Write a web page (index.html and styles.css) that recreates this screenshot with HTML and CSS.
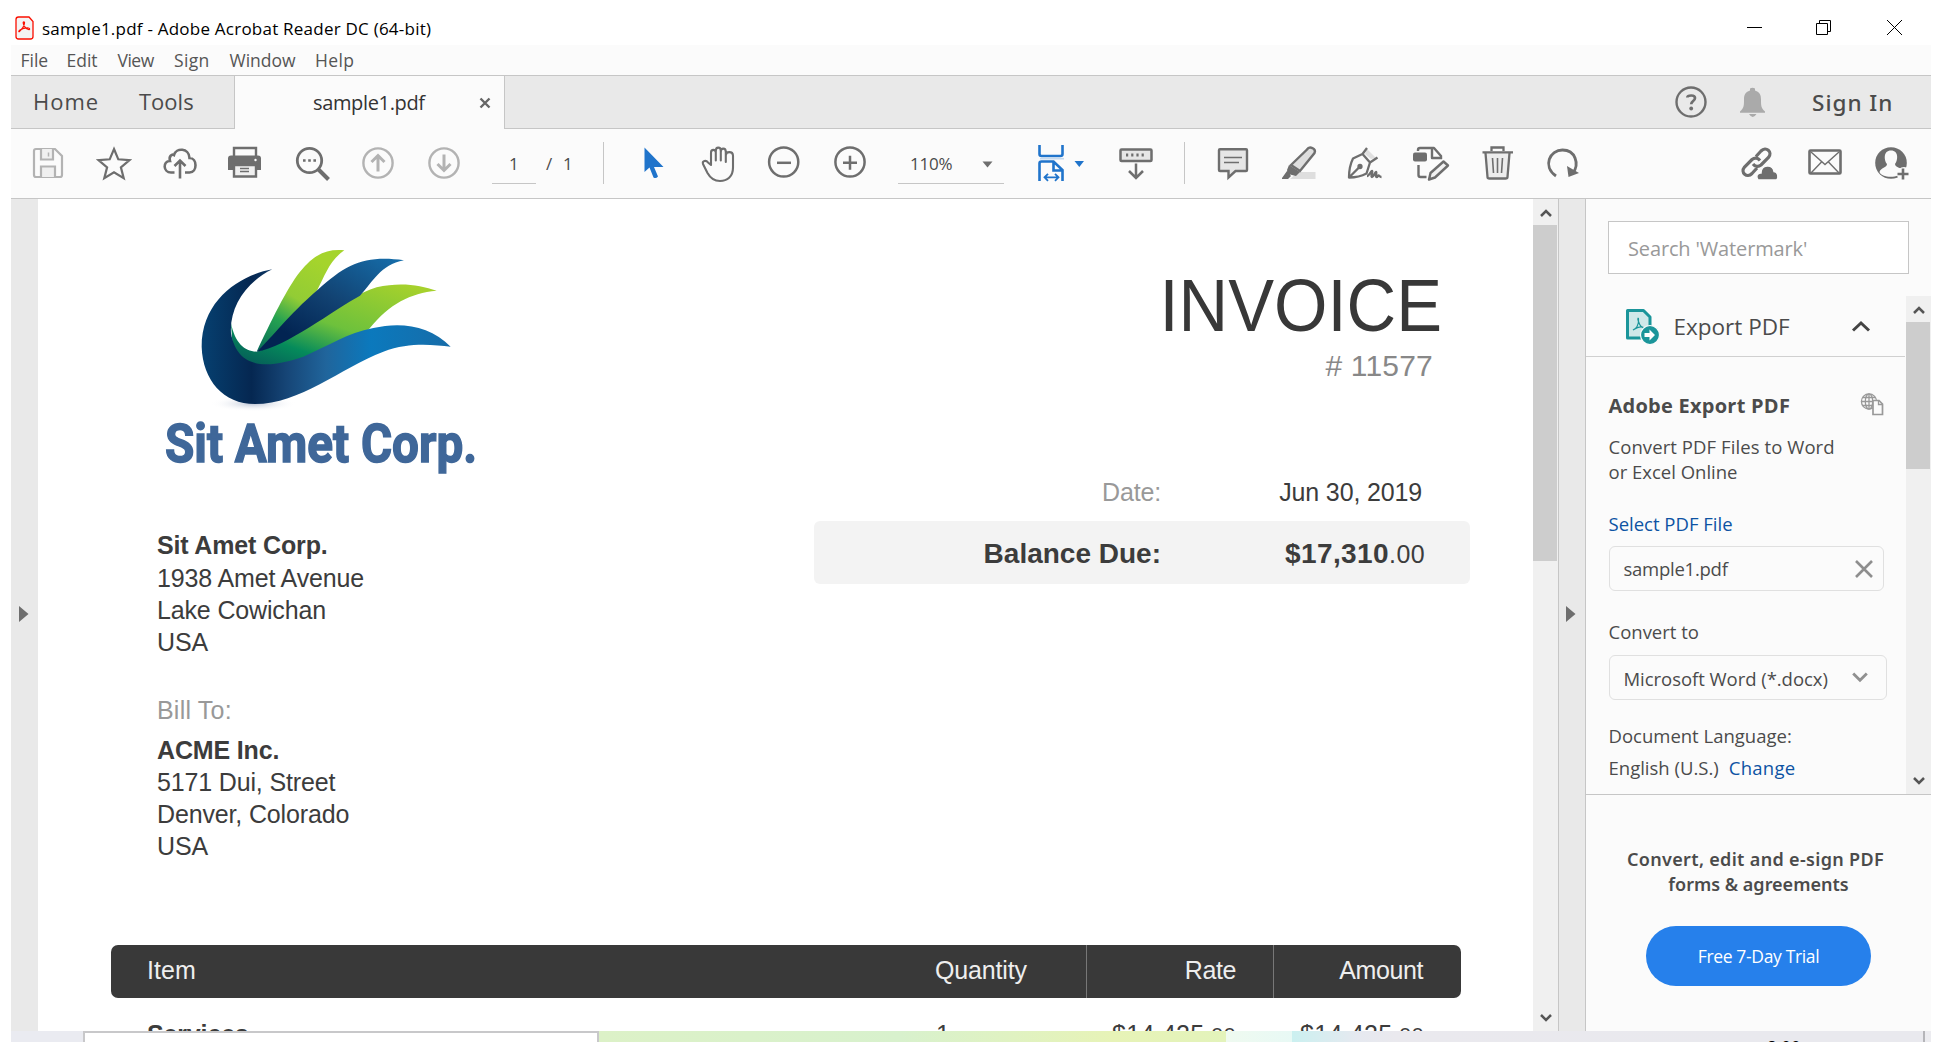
FILE: index.html
```html
<!DOCTYPE html>
<html lang="en">
<head>
<meta charset="utf-8">
<title>sample1.pdf - Adobe Acrobat Reader DC (64-bit)</title>
<link rel="stylesheet" href="styles.css">
</head>
<body>
<div class="window">
  <header class="titlebar">
    <svg class="app-icon" width="19" height="24" viewBox="15.5 15.5 19 24"><path d="M19 16.5h10.5l4 4.500V36a2.500 2.500 0 0 1-2.500 2.500H19a2.500 2.500 0 0 1-2.500-2.500V19a2.500 2.500 0 0 1 2.500-2.500z" fill="#f4f4f4" stroke="#fa0f00" stroke-width="1.300"/><path d="M20 31c2-2 4.500-4 5-8.500.1-1.500-1.400-1.500-1.300 0 .3 3 2.800 6 5.300 6.500 1.500.3 1.500-1.400 0-1.500-3-.2-6.500.8-8.500 2-1.400.8-1.500 2.300-.5 1.500z" fill="none" stroke="#fa0f00" stroke-width="1.200"/></svg>
    <span class="title">sample1.pdf - Adobe Acrobat Reader DC (64-bit)</span>
    <svg class="win-controls" width="160" height="17" viewBox="1745 19 160 17" fill="none" stroke="#000"><path d="M1747 27.500h15M1816.500 23.500h11v11h-11zM1819.500 23.500v-3h11v11h-3M1887 20l15 15M1902 20l-15 15"/></svg>
  </header>
  <nav class="menubar"><span>File</span><span>Edit</span><span class="tight">View</span><span class="loose">Sign</span><span>Window</span><span class="loose">Help</span></nav>

  <div class="tabs">
    <span class="home">Home</span><span class="tools">Tools</span>
    <div class="tab"><span>sample1.pdf</span><svg width="12" height="12" viewBox="479 96 12 12"><path d="M480.500 97.500l9 9m0-9l-9 9" stroke="#666" stroke-width="2.400"/></svg></div>
    <div class="account">
      <svg width="100" height="36" viewBox="1670 84 100 36"><circle cx="1691" cy="102" r="14.500" fill="none" stroke="#6e6e6e" stroke-width="2.400"/><path d="M1687.300 97.500c.2-2.500 7.700-3 7.700.5 0 3-3.800 3-3.800 6.200" fill="none" stroke="#6e6e6e" stroke-width="2.700"/><circle cx="1691.200" cy="108.500" r="1.900" fill="#6e6e6e"/><path d="M1750 88.500q2.500-1.500 5 0v2c5 1.500 6 5 6 9 0 6 0 8.500 4 12v1.200h-25v-1.200c4-3.500 4-6 4-12 0-4 1-7.500 6-9zM1749 114h7.500q-3.750 6-7.500 0z" fill="#aaa"/></svg>
      <span>Sign In</span>
    </div>
  </div>

  <div class="toolbar">
    <svg width="66" height="69" viewBox="15 129 66 69" fill="none" stroke="#b3b3b3" stroke-width="2.200"><path d="M36 149h19l7 7v19q0 2-2 2H36q-2 0-2-2v-24q0-2 2-2z"/><path d="M41 149v10.500h12V149M41 177v-10.500h14V177" fill="#f0f0f0"/><path d="M48.500 152.500v4" stroke-width="1.500"/></svg>
    <svg width="66" height="69" viewBox="81 129 66 69" fill="none" stroke="#6e6e6e" stroke-width="2.200"><path d="M114 149l4.300 10.300 11.200 .9-8.600 7.200 2.800 10.800-9.700-6-9.700 6 2.800-10.800-8.600-7.200 11.200-.9z"/></svg>
    <svg width="66" height="69" viewBox="147 129 66 69" fill="none" stroke="#6e6e6e" stroke-width="2.600"><path d="M174.500 172.500H171c-8 0-8.500-11.500-1-11.500-1.500-5 2-7 4-6 2-7.500 15-7.500 15.500 3 8 0 8 14.500 0 14.500h-4.500M180 178.500v-18M174.500 166l5.500-5.500 5.500 5.500"/></svg>
    <svg width="66" height="69" viewBox="213 129 66 69"><path d="M234 156v-8h22v8" fill="#fbfbfb" stroke="#6e6e6e" stroke-width="2.400"/><path d="M231 155.500h27q3 0 3 3V170h-33v-11.500q0-3 3-3z" fill="#6e6e6e"/><circle cx="255.500" cy="160" r="1.200" fill="#fff"/><path d="M234 165h22v11.500h-22z" fill="#f0f0f0" stroke="#6e6e6e" stroke-width="2.400"/><path d="M240 168.500h9m-9 3h9" stroke="#6e6e6e" stroke-width="1.300"/></svg>
    <svg width="66" height="69" viewBox="279 129 66 69" fill="none" stroke="#6e6e6e" stroke-width="2.800"><circle cx="309.500" cy="160.500" r="12.200"/><path d="M318 169l10.500 10.500" stroke-width="4"/><path d="M303 160.500h2.600m2.600 0h2.600m2.600 0h2.600" stroke-width="2.600"/></svg>
    <svg width="66" height="69" viewBox="345 129 66 69" fill="none" stroke="#b3b3b3" stroke-width="2.400"><circle cx="378" cy="163" r="14.600"/><path d="M378 171.500v-15M371.500 162l6.500-6.500 6.500 6.500" stroke-width="3"/></svg>
    <svg width="66" height="69" viewBox="411 129 66 69" fill="none" stroke="#b3b3b3" stroke-width="2.400"><circle cx="444" cy="163" r="14.600"/><path d="M444 154.500v15M437.500 164l6.500 6.500 6.500-6.500" stroke-width="3"/></svg>
    <span class="page-no">1</span><span class="slash">/</span><span class="total">1</span>
    <i class="sep"></i>
    <svg width="80" height="69" viewBox="604 129 80 69"><path d="M644.500 147.500v24.500l5-4.500 4 10q2.500 1.500 4.500-1l-4-9.500h9.500z" fill="#2074cb"/></svg>
    <svg width="66" height="69" viewBox="684 129 66 69" fill="none" stroke="#6e6e6e" stroke-width="2.100" stroke-linejoin="round" stroke-linecap="round"><path d="M711 165v-12.500c0-3.500 4.800-3.500 4.800 0v8-9.500c0-4.500 5-4.500 5 0v9.500-8.500c0-4.500 5-4.500 5 0v10-6.500c0-4.500 7-4.500 7.200 0v12c0 9.500-6 13.500-13 13.500-6.500 0-10-3.500-12.500-8l-4.500-9c-1-3 3-4.500 5-1.500z"/></svg>
    <svg width="67" height="69" viewBox="750 129 67 69" fill="none" stroke="#6e6e6e" stroke-width="2.500"><circle cx="783.700" cy="162" r="14.600"/><path d="M777 162.800h14"/></svg>
    <svg width="66" height="69" viewBox="817 129 66 69" fill="none" stroke="#6e6e6e" stroke-width="2.500"><circle cx="850" cy="162" r="14.600"/><path d="M843 162.800h14m-7-7v14"/></svg>
    <span class="zoom"><span>110%</span><svg width="11" height="7" viewBox="0 0 11 7"><path d="M.5.5h10L5.500 6.500z" fill="#6e6e6e"/></svg></span>
    <svg width="90" height="69" viewBox="1010 129 90 69" fill="none" stroke="#2074cb" stroke-width="2.600"><path d="M1039.500 145v9q0 2 2 2h19q2 0 2-2v-9M1039.500 181v-17.500q0-2 2-2h12l9 8.500v11M1053.500 162v8.500h9"/><path d="M1040 158.700h24" stroke="#c5d9ee" stroke-width="1.600"/><path d="M1045 177.300h13m-10-3.500l-3.500 3.500 3.500 3.500m7-7l3.500 3.500-3.500 3.500" stroke-width="1.800"/><path d="M1074.500 161h9.500l-4.700 6z" fill="#2074cb" stroke="none"/></svg>
    <svg width="84" height="69" viewBox="1100 129 84 69" fill="none" stroke="#6e6e6e" stroke-width="2.500"><rect x="1120.500" y="149.500" width="31" height="11.500" rx="1" fill="#e6e6e6"/><path d="M1126 155h2.200m3 0h2.200m3 0h2.200m3 0h2.200" stroke-width="3"/><path d="M1136 163.500v14M1129 171l7 7 7-7"/></svg>
    <i class="sep late"></i>
    <svg width="80" height="69" viewBox="1185 129 80 69"><path d="M1220 149.200h26q1 0 1 1V170q0 1-1 1h-10.500l-7 6.500V171H1220q-1 0-1-1v-19.800q0-1 1-1z" fill="#e6e6e6" stroke="#6e6e6e" stroke-width="2.400"/><path d="M1224 157.500h18m-18 5h15" stroke="#6e6e6e" stroke-width="1.500"/></svg>
    <svg width="66" height="69" viewBox="1265 129 66 69"><path d="M1290 179l8-7h17.500v7z" fill="#dedede"/><path d="M1291 165l16-15.500c2.500-4 9.500-1 7.500 3.500L1300 171z" fill="#dedede" stroke="#6e6e6e" stroke-width="2.400"/><path d="M1289 165l11 7-4 4-8-2-1-4zM1282 178l5-7 4 5-3 3h-6z" fill="#6e6e6e"/></svg>
    <svg width="67" height="69" viewBox="1331 129 67 69" fill="none" stroke="#6e6e6e" stroke-width="2.300" stroke-linejoin="round"><path d="M1367 149l9 9-5 1-6-5z" fill="#e0e0e0" stroke="none"/><path d="M1367 148l-4.500 6-9.500 4.500c-3 6-4 12-4 19 6 0 12-1 17.500-4l3.500-11 7.500-5M1362.500 154l7.500 8.500M1350 176.500l10-10"/><circle cx="1360" cy="166.500" r="1.500" fill="#6e6e6e"/><path d="M1367 176c2 0 4-5 5-5s-1.500 6 0 6 3-5 4-5-1 5 .5 5 1-1.500 2-1.500 1 1.500 3 1.500"/></svg>
    <svg width="67" height="69" viewBox="1398 129 67 69" fill="none" stroke="#6e6e6e" stroke-width="2.400" stroke-linejoin="round"><rect x="1413" y="152.500" width="14" height="9" rx="2" fill="#6e6e6e" stroke="none"/><path d="M1418 151v-1q0-2 2-2h14l7 8v3M1432 148v10h10M1418.500 165v10q0 2 2 2h6"/><path d="M1429 179.500l1.500-6.500 13-11.500 4.500 4-13 12z" fill="#f2f2f2"/></svg>
    <svg width="66" height="69" viewBox="1465 129 66 69" fill="none" stroke="#6e6e6e" stroke-width="2.300"><path d="M1485.500 153l2 24q0 1.500 2 1.500h16q2 0 2-1.500l2-24" fill="#ececec"/><path d="M1482.500 152.300h30.500M1491.500 151v-3.500h12v3.500"/><path d="M1492.500 158l1 15m4-15v15m5-15l-1 15" stroke-width="1.600"/></svg>
    <svg width="66" height="69" viewBox="1531 129 66 69" fill="none" stroke="#6e6e6e" stroke-width="2.800"><path d="M1556 176c-14-10-6-26 6.500-26 13 0 17 14 10.500 23"/><path d="M1567 166l12 7-10.500 4z" fill="#6e6e6e" stroke="none"/></svg>
    <svg class="share" width="66" height="69" viewBox="1726 129 66 69" fill="none" stroke="#6e6e6e" stroke-width="3.200"><path d="M1756 156.500l5-5.500c5-5 12 1 7.500 6.500l-7.500 7.500c-3 2.500-6 1.500-8-1M1757 168l-5 5.500c-5 5-12-1-7.500-6.500l7.500-7.500c3-2.500 6-1.500 8 1"/><path d="M1758 180c-3-4 0-7.500 3-7 0-9 12-9 13-1.500 4 0 5 6 2.500 8.500z" fill="#6e6e6e" stroke="#fbfbfb" stroke-width="1.400"/></svg>
    <svg width="66" height="69" viewBox="1792 129 66 69" fill="none" stroke="#6e6e6e"><rect x="1809.500" y="150.500" width="31" height="23" rx="1" stroke-width="2.600"/><path d="M1811 152l14 12.500 14-12.500M1811 173l10.500-11m17.500 11l-10.500-11" stroke-width="1.400"/></svg>
    <svg width="66" height="69" viewBox="1858 129 66 69"><circle cx="1891" cy="163" r="15.800" fill="#6e6e6e"/><path d="M1891 150.500c8 0 7 10 4 13.500 0 4 7.500 3.500 8 7-3 8-22 7-23.500 1 1-4.500 7.500-4 7.500-8-3-3.500-4-13.500 4-13.500z" fill="#fbfbfb"/><circle cx="1904" cy="174" r="7" fill="#fbfbfb"/><path d="M1903 168.500v11m-5.500-5.500h11" stroke="#6e6e6e" stroke-width="2.600"/></svg>
  </div>

  <main class="workspace">
    <div class="rail left"><svg width="10" height="16" viewBox="0 0 10 16"><path d="M0 0l9.500 8L0 16z" fill="#6e6e6e"/></svg></div>
    <section class="page">
      <div class="page-top">
        <div class="parties">
          <svg class="logo" width="330" height="240" viewBox="156 240 330 240">
            <defs>
              <linearGradient id="tail" x1="0" x2="1"><stop offset="0" stop-color="#064070"/><stop offset=".2" stop-color="#052751"/><stop offset=".34" stop-color="#164576"/><stop offset=".5" stop-color="#20659c"/><stop offset=".68" stop-color="#0b79bd"/><stop offset="1" stop-color="#176ca8"/></linearGradient>
              <linearGradient id="leaf" x1="0" y1="1" x2=".85" y2="0"><stop offset="0" stop-color="#064c57"/><stop offset=".3" stop-color="#058b5b"/><stop offset=".55" stop-color="#6dc13c"/><stop offset="1" stop-color="#a6d12c"/></linearGradient>
              <linearGradient id="leaf2" x1="0" y1="1" x2=".5" y2="0"><stop offset="0" stop-color="#06695a"/><stop offset=".35" stop-color="#25a251"/><stop offset=".6" stop-color="#92cc35"/><stop offset="1" stop-color="#a5d42c"/></linearGradient>
              <linearGradient id="navy" x1="0" y1="1" x2="1" y2="0"><stop offset=".2" stop-color="#022452"/><stop offset=".55" stop-color="#124373"/><stop offset="1" stop-color="#166fac"/></linearGradient>
              <radialGradient id="shade"><stop offset="0" stop-color="#bcc5d6"/><stop offset="1" stop-color="#fff" stop-opacity="0"/></radialGradient>
            </defs>
            <g transform="translate(100 200) scale(.33333)">
              <ellipse cx="460" cy="611" rx="130" ry="24" fill="url(#shade)"/>
              <path d="M470 455C510 370 560 265 600 215 640 165 680 145 733 151 690 180 675 225 652 270 600 335 550 390 470 455z" fill="url(#leaf2)"/>
              <path d="M393 370C405 430 435 455 470 455 550 430 620 360 690 330 750 300 775 280 830 262 900 245 960 255 1010 272 930 280 870 310 808 386L740 440 520 510 400 470z" fill="url(#leaf)"/>
              <path d="M470 455C520 410 560 350 655 268 740 190 800 165 912 181 840 195 820 245 780 287 700 330 560 440 470 455z" fill="url(#navy)"/>
              <path d="M517 208C420 225 305 300 305 440 308 540 370 612 465 612 600 612 720 505 850 455 930 425 1000 435 1052 440 990 375 900 365 820 384 740 400 690 435 610 470 520 500 415 520 393 400 388 320 440 245 517 208z" fill="url(#tail)"/>
            </g>
            <text class="logo-text" x="165" y="462" textLength="312" lengthAdjust="spacingAndGlyphs">Sit Amet Corp.</text>
          </svg>
          <div class="address from"><b>Sit Amet Corp.</b><span>1938 Amet Avenue</span><span>Lake Cowichan</span><span>USA</span></div>
          <div class="bill-label">Bill To:</div>
          <div class="address to"><b>ACME Inc.</b><span>5171 Dui, Street</span><span>Denver, Colorado</span><span>USA</span></div>
        </div>
        <div class="summary">
          <h1>INVOICE</h1>
          <div class="number"># 11577</div>
          <div class="date-row"><span class="label">Date:</span><span class="value">Jun 30, 2019</span></div>
          <div class="balance"><b class="label">Balance Due:</b><span class="value"><b>$17,310</b><small>.00</small></span></div>
        </div>
      </div>
      <div class="items head"><span>Item</span><span>Quantity</span><span class="num">Rate</span><span class="num">Amount</span></div>
      <div class="items row"><b>Services</b><span class="qty">1</span><span class="num">$14,425<small>.00</small></span><span class="num">$14,425<small>.00</small></span></div>
    </section>
    <div class="scroll doc"><svg width="12" height="10" viewBox="0 0 12 10"><path d="M1 8l5-5 5 5" fill="none" stroke="#555" stroke-width="2.500"/></svg><i class="thumb"></i><svg class="down" width="12" height="10" viewBox="0 0 12 10"><path d="M1 2l5 5 5-5" fill="none" stroke="#555" stroke-width="2.500"/></svg></div>
    <div class="rail right"><svg width="10" height="16" viewBox="0 0 10 16"><path d="M0 0l9.500 8L0 16z" fill="#6e6e6e"/></svg></div>
    <aside class="sidebar">
      <div class="search">Search 'Watermark'</div>
      <div class="panel">
        <div class="panel-main">
          <div class="export-head">
            <svg width="36" height="38" viewBox="1625 307 36 38"><path d="M1627.500 310.500h16l6.500 6.500v21h-22.500z" fill="#cfe8e9" stroke="#1b959a" stroke-width="3" stroke-linejoin="round"/><path d="M1633 330c3-1 6-5 5.500-10.500 0-2-1.500-2 0 2 1 3.500 3 6 5.500 6.500-2-2-7-.5-11 2z" fill="none" stroke="#1b959a" stroke-width="1.200"/><circle cx="1650" cy="335" r="9.500" fill="#1b959a" stroke="#fbfbfb" stroke-width="1.200"/><path d="M1644.500 333h5v-3.500l5.500 5.500-5.500 5.500V337h-5z" fill="#fff"/></svg>
            <span>Export PDF</span>
            <svg width="20" height="14" viewBox="1851 318 20 14"><path d="M1853 329.500l8-7.500 8 7.500" fill="none" stroke="#444" stroke-width="3"/></svg>
          </div>
          <div class="export-body">
            <div class="export-title"><b>Adobe Export PDF</b><svg width="24" height="24" viewBox="1860 391 24 24" fill="none" stroke="#999" stroke-width="1.300"><circle cx="1869" cy="400.500" r="7.600"/><ellipse cx="1869" cy="400.500" rx="3.700" ry="7.600"/><path d="M1861.500 400.500h15M1862.500 396.500h13M1862.500 404.500h13M1869 393v15"/><path d="M1873 399.500h6l3.500 3.500v10.500h-9.500z" fill="#fbfbfb" stroke-width="1.700"/><path d="M1878.500 399.500v4h4"/></svg></div>
            <p class="desc"><span>Convert PDF Files to Word</span><br>or Excel Online</p>
            <div class="link select">Select PDF File</div>
            <div class="field file"><span>sample1.pdf</span><svg width="18" height="18" viewBox="0 0 18 18"><path d="M1 1l16 16M17 1L1 17" stroke="#8e8e8e" stroke-width="2.600"/></svg></div>
            <div class="convert">Convert to</div>
            <div class="field format"><span>Microsoft Word (*.docx)</span><svg width="16" height="11" viewBox="0 0 16 11"><path d="M1.200 1.500L8 8.300l6.800-6.800" fill="none" stroke="#909090" stroke-width="2.800"/></svg></div>
            <div class="doc-lang">Document Language:</div>
            <div class="lang-row"><span>English (U.S.)</span><span class="link change">Change</span></div>
          </div>
        </div>
        <div class="scroll side"><svg width="12" height="10" viewBox="0 0 12 10"><path d="M1 8l5-5 5 5" fill="none" stroke="#555" stroke-width="2.500"/></svg><i class="thumb"></i><svg class="down" width="12" height="10" viewBox="0 0 12 10"><path d="M1 2l5 5 5-5" fill="none" stroke="#555" stroke-width="2.500"/></svg></div>
      </div>
      <div class="promo">
        <p><span class="wide">Convert, edit and e-sign PDF</span><br><span>forms &amp; agreements</span></p>
        <div class="trial">Free 7-Day Trial</div>
      </div>
    </aside>
  </main>
  <footer class="taskbar"><i class="edge"></i><i class="searchbox"></i><i class="green"></i><i class="mint"></i><i class="sky"></i><span class="clock">8:00</span><i class="desk"></i></footer>
</div>
</body>
</html>
```
FILE: styles.css
```css
* { box-sizing: border-box; }
body { margin: 0; width: 1942px; height: 1042px; overflow: hidden; background: #fff; font-family: "Open Sans", "Noto Sans", sans-serif; color: #4b4b4b; }
svg { display: block; flex: none; }
p, h1 { margin: 0; font-weight: 400; }
.window { width: 1920px; height: 1042px; margin-left: 11px; display: flex; flex-direction: column; overflow: hidden; white-space: nowrap; }
.window > * { flex: none; }

.titlebar { height: 45px; display: flex; align-items: center; padding: 11px 26px 0 4px; color: #000; font-size: 17px; letter-spacing: .23px; }
.title { margin-left: 8px; margin-right: auto; }
.win-controls { margin-bottom: 1px; }

.menubar { height: 31px; padding: 1px 0 0 9.500px; background: #fbfbfb; border-bottom: 1px solid #c6c6c6; display: grid; grid-template-columns: 46px 51px 56.500px 55.500px 85.500px 60px; font-size: 17.500px; line-height: 29px; color: #555; }
.tight { letter-spacing: -.5px; }
.loose { letter-spacing: .35px; }

.tabs { height: 53px; display: flex; background: #e9e9e9; line-height: 51px; font-size: 22px; }
.tabs > span, .account { border-bottom: 1px solid #c6c6c6; }
.home { width: 128px; padding-left: 22px; letter-spacing: 1px; }
.tools { width: 95px; }
.tab { width: 271px; display: flex; align-items: center; background: #fbfbfb; border: solid #c6c6c6; border-width: 0 1px; font-size: 20px; letter-spacing: -.35px; padding-left: 78px; color: #333; }
.tab span { width: 166px; }
.account { flex: 1; display: flex; align-items: center; padding-left: 1165px; }
.account span { margin-left: 42px; font-family: "Noto Sans", sans-serif; font-weight: 500; font-size: 22.500px; letter-spacing: 1px; }

.toolbar { height: 70px; display: flex; padding-left: 4px; background: #fbfbfb; border-bottom: 1px solid #c6c6c6; font-size: 17px; line-height: 38px; }
.page-no { width: 44px; height: 39px; margin: 16px 0 0 15px; padding-left: 17px; border-bottom: 1px solid #c6c6c6; }
.slash { margin: 16px 0 0 10px; width: 17px; }
.total { margin-top: 16px; width: 40px; }
.sep { width: 1px; height: 42px; margin-top: 13px; background: #c6c6c6; }
.zoom { width: 106px; height: 39px; margin: 16px 6px 0 15px; border-bottom: 1px solid #c6c6c6; padding: 0 11px 0 12px; display: flex; justify-content: space-between; letter-spacing: -.2px; align-items: center; }
.share { margin-left: 129px; }

.workspace { height: 832px; display: flex; }
.rail { width: 27px; background: #e9e9e9; padding: 407px 0 0 8px; flex: none; }
.rail.right { width: 28px; border: solid #c6c6c6; border-width: 0 1px; padding-left: 7px; }
.scroll { width: 25px; background: #f0f0f0; display: flex; flex-direction: column; align-items: center; flex: none; padding: 9px 0 8px; }
.scroll .thumb { width: 24px; align-self: flex-start; background: #cdcdcd; margin-top: 7px; }
.scroll .down { margin-top: auto; }
.doc .thumb { height: 336px; }
.side .thumb { height: 147px; }

.page { width: 1495px; flex: none; overflow: hidden; font-family: "Liberation Sans", Arial, sans-serif; font-size: 25px; line-height: 32px; letter-spacing: -.15px; color: #3c3c3c; }
.page-top { height: 746px; display: flex; justify-content: space-between; padding: 0 63px 0 118px; }
.logo { margin-top: 41px; }
.logo-text { font-family: "Liberation Sans Narrow", Roboto, sans-serif; font-weight: 700; font-size: 54px; letter-spacing: 0; fill: #3f6799; stroke: #3f6799; stroke-width: 1.500px; }
.address { display: flex; flex-direction: column; padding-left: 1px; }
.from { margin-top: 49px; }
.from b { margin-bottom: 1px; }
.bill-label { margin-top: 36px; padding-left: 1px; color: #999; letter-spacing: .2px; }
.to { margin-top: 8px; }
.summary { width: 656px; }
h1 { margin-top: 67px; padding-right: 28px; text-align: right; font-size: 73.500px; line-height: 80px; letter-spacing: 0; transform: scaleX(.935); transform-origin: 629px 0; color: #383838; }
.number { margin-top: 2px; padding-right: 37px; text-align: right; font-size: 30px; line-height: 36px; letter-spacing: .2px; color: #888; }
.date-row { display: flex; margin: 92px 0 13px; }
.label { width: 347px; text-align: right; flex: none; }
.date-row .label { color: #999; }
.value { flex: 1; text-align: right; padding-right: 48px; }
.balance { height: 63px; display: flex; line-height: 65px; background: #f3f3f3; border-radius: 6px; font-size: 28px; letter-spacing: 0; }
.balance .value { padding-right: 45px; }
.balance .value b { letter-spacing: .4px; }
.balance small { font-size: 25px; letter-spacing: .4px; }
.items { display: grid; grid-template-columns: 824px 151px 187px 188px; margin-left: 73px; width: 1350px; }
.head { height: 52.500px; line-height: 51px; background: #393939; border-radius: 7px; color: #eee; }
.head span:nth-child(1) { letter-spacing: .1px; }
.items > :first-child { padding-left: 36px; }
.num { text-align: right; padding-right: 37px; letter-spacing: -.4px; }
.row { margin-top: 20px; }
.row .num { letter-spacing: .3px; }
.head .num { border-left: 1px solid #777; }
.head .num:last-child { padding-right: 38px; }
.row small { font-size: 22px; }
.qty { padding-left: 1px; }

.sidebar { width: 345px; background: #fbfbfb; font-size: 18.500px; line-height: 25px; }
.search { width: 301px; height: 53px; margin: 22px 0 22px 22px; padding-left: 19px; border: 1px solid #c6c6c6; background: #fff; color: #999; font-size: 20px; line-height: 54px; letter-spacing: -.14px; }
.panel { height: 498px; display: flex; }
.panel-main { width: 320px; }
.export-head { height: 61px; width: 319px; border-bottom: 1px solid #d0d0d0; display: flex; align-items: center; padding-left: 39px; font-size: 22.500px; }
.export-head span { margin-left: 12.500px; width: 177.500px; }
.export-body { padding-left: 22.500px; }
.export-title { display: flex; align-items: flex-start; justify-content: space-between; height: 24px; margin-top: 35px; padding-right: 22px; font-size: 20px; letter-spacing: .25px; line-height: 27px; }
.desc { margin-top: 18px; }
.desc span { letter-spacing: .08px; }
.link { color: #0d53a3; }
.select { margin-top: 27px; }
.field { height: 45px; border: 1px solid #e0e0e0; border-radius: 6px; display: flex; align-items: center; justify-content: space-between; padding-left: 14px; }
.file { width: 275px; margin-top: 10px; padding-right: 10px; letter-spacing: -.25px; }
.convert { margin-top: 28px; }
.format { width: 278px; margin-top: 11px; padding-right: 18px; }
.format span { padding-top: 2px; letter-spacing: -.04px; }
.doc-lang { margin-top: 22px; padding-top: 1px; }
.lang-row { margin-top: 7px; display: flex; gap: 10px; }
.change { letter-spacing: .27px; }
.promo { height: 237px; border-top: 1px solid #c6c6c6; padding-top: 52px; text-align: center; font-size: 18px; }
.promo p { font-family: "Noto Sans", sans-serif; font-weight: 600; }
.wide { letter-spacing: .33px; margin-right: 6px; }
.trial { width: 225px; height: 60px; margin: 29px 0 0 60px; border-radius: 30px; background: #2680eb; color: #fff; font-size: 17.500px; line-height: 60px; letter-spacing: -.35px; }

.taskbar { height: 11px; display: flex; overflow: hidden; }
.edge { width: 72px; background: #eaebf1; }
.searchbox { width: 516px; border: 2px solid #c8c8ca; border-bottom: 0; background: #fff; }
.green { width: 627px; background: linear-gradient(90deg, #dcf1c7, #d8f1cd 48%, #e7f3b7 82%, #e3f3bb); }
.mint { width: 66px; background: linear-gradient(90deg, #effaf0, #e8f9f5); }
.sky { width: 470px; background: linear-gradient(90deg, #cbf0f0, #e6e9f0 14%, #eae9ee 22%, #e9e9ee); }
.clock { flex: 1; background: #e9e9ee; color: #000; font-size: 17px; line-height: 31px; padding-left: 5px; }
.desk { width: 8px; border-left: 2px solid #b5b5b9; background: #ececf0; }
```
